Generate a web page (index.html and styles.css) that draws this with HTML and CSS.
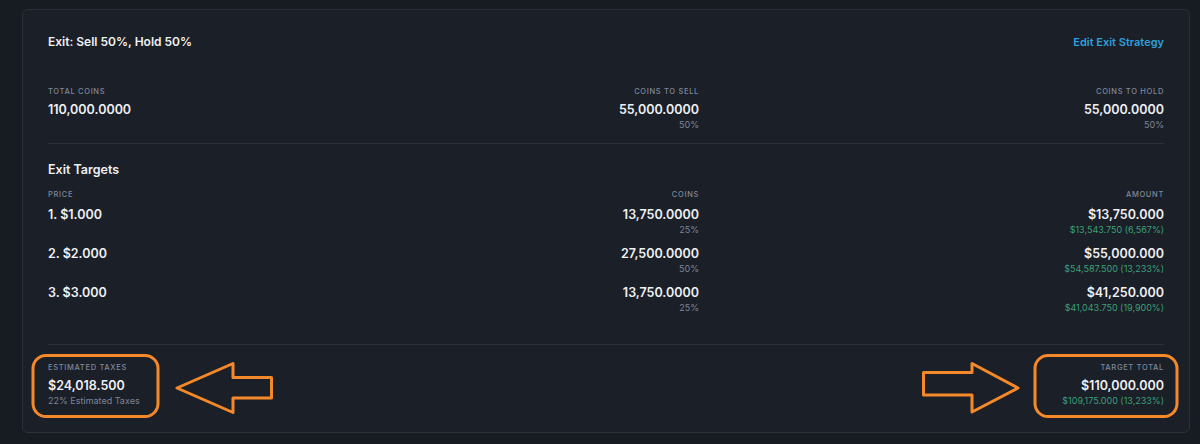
FILE: index.html
```html
<!DOCTYPE html>
<html lang="en">

<head>
    <meta charset="UTF-8">
    <meta name="viewport" content="width=device-width, initial-scale=1.0">
    <title>Exit Strategy</title>
    <link rel="stylesheet" href="styles.css">
</head>

<body>
    <div class="exit_card">
        <div class="exit_header">
            <h1>Exit: Sell 50%, Hold 50%</h1>
            <a class="edit_link" href="#">Edit Exit Strategy</a>
        </div>

        <!-- coins summary -->
        <div class="stat_grid">
            <div class="stat">
                <div class="label">Total Coins</div>
                <div class="value">110,000.0000</div>
            </div>
            <div class="stat right">
                <div class="label">Coins to Sell</div>
                <div class="value">55,000.0000</div>
                <div class="sub">50%</div>
            </div>
            <div class="stat right">
                <div class="label">Coins to Hold</div>
                <div class="value">55,000.0000</div>
                <div class="sub">50%</div>
            </div>
        </div>

        <!-- targets -->
        <div class="targets">
            <h2>Exit Targets</h2>
            <div class="target_grid">
                <div class="label">Price</div>
                <div class="label right">Coins</div>
                <div class="label right">Amount</div>

                <div class="row first">
                    <div class="value">1. $1.000</div>
                    <div class="right">
                        <div class="value">13,750.0000</div>
                        <div class="sub">25%</div>
                    </div>
                    <div class="right">
                        <div class="value">$13,750.000</div>
                        <div class="sub green">$13,543.750 (6,567%)</div>
                    </div>
                </div>
                <div class="row">
                    <div class="value">2. $2.000</div>
                    <div class="right">
                        <div class="value">27,500.0000</div>
                        <div class="sub">50%</div>
                    </div>
                    <div class="right">
                        <div class="value">$55,000.000</div>
                        <div class="sub green">$54,587.500 (13,233%)</div>
                    </div>
                </div>
                <div class="row">
                    <div class="value">3. $3.000</div>
                    <div class="right">
                        <div class="value">13,750.0000</div>
                        <div class="sub">25%</div>
                    </div>
                    <div class="right">
                        <div class="value">$41,250.000</div>
                        <div class="sub green">$41,043.750 (19,900%)</div>
                    </div>
                </div>
            </div>
        </div>

        <!-- totals -->
        <div class="totals">
            <div class="stat">
                <div class="label">Estimated Taxes</div>
                <div class="value">$24,018.500</div>
                <div class="sub">22% Estimated Taxes</div>
            </div>
            <div class="stat right">
                <div class="label">Target Total</div>
                <div class="value">$110,000.000</div>
                <div class="sub green">$109,175.000 (13,233%)</div>
            </div>
        </div>
    </div>

    <!-- orange markup drawn over the screenshot -->
    <svg class="markup" width="1200" height="444" viewBox="0 0 1200 444">
        <g fill="none" stroke="#f5892a" stroke-width="3" stroke-linejoin="round">
            <rect x="33" y="355.5" width="125" height="61" rx="13" />
            <path d="M177 388 L233 363.5 L233 377.5 L271.5 377.5 L271.5 398 L233 398 L233 412.5 Z" />
            <path d="M923.5 372.5 L972 372.5 L972 363.5 L1018 388 L972 412 L972 395 L923.5 395 Z" />
            <rect x="1035" y="355.5" width="142" height="61" rx="13" />
        </g>
    </svg>
</body>

</html>
```

FILE: styles.css
```css
/* base */
* {
    box-sizing: border-box;
    margin: 0;
    padding: 0;
}

html,
body {
    width: 100%;
    height: 100%;
    background-color: #171b22;
    color: #eef0f4;
    font-family: Inter, "Noto Sans", sans-serif;
    overflow: hidden;
}

body {
    padding: 9px 10px 0 22px;
    position: relative;
}

/* card */
.exit_card {
    width: 1168px;
    height: 424px;
    background-color: #1b1f27;
    border: 1px solid #2b3039;
    border-radius: 6px;
    padding: 22px 25px 0 25px;
}

.exit_header {
    display: flex;
    justify-content: space-between;
    align-items: center;
    height: 20px;
}

h1 {
    font-size: 12px;
    font-weight: 600;
    line-height: 20px;
}

.edit_link {
    color: #2f9fdc;
    font-size: 11px;
    font-weight: 600;
    text-decoration: none;
}

/* shared text */
.label {
    font-size: 7.5px;
    line-height: 12px;
    letter-spacing: 0.09em;
    text-transform: uppercase;
    color: #7f889a;
    font-weight: 500;
}

.value {
    font-size: 12.5px;
    line-height: 18px;
    font-weight: 600;
    color: #eef0f4;
}

.sub {
    font-size: 9px;
    line-height: 12px;
    color: #7c8599;
}

.sub.green {
    color: #3c9f79;
}

.right {
    text-align: right;
}

/* coins summary */
.stat_grid {
    display: grid;
    grid-template-columns: 4fr 3fr 5fr;
    margin-top: 34px;
    padding-bottom: 12px;
    border-bottom: 1px solid #2b3039;
}

.stat .label {
    margin-bottom: 3px;
}

/* targets */
.targets {
    padding-top: 17px;
    padding-bottom: 27px;
    border-bottom: 1px solid #2b3039;
}

h2 {
    font-size: 12.5px;
    font-weight: 600;
    line-height: 18px;
    margin-bottom: 10px;
}

.target_grid {
    display: grid;
    grid-template-columns: 4fr 3fr 5fr;
}

.target_grid .row {
    display: contents;
}

.target_grid .row > div {
    padding-top: 6px;
    padding-bottom: 3px;
}

.target_grid .row.first > div {
    padding-top: 5px;
}

/* totals */
.totals {
    display: flex;
    justify-content: space-between;
    padding-top: 17px;
}

.totals .stat .label {
    margin-bottom: 3px;
}

/* annotation */
.markup {
    position: absolute;
    left: 0;
    top: 0;
    pointer-events: none;
}
```
